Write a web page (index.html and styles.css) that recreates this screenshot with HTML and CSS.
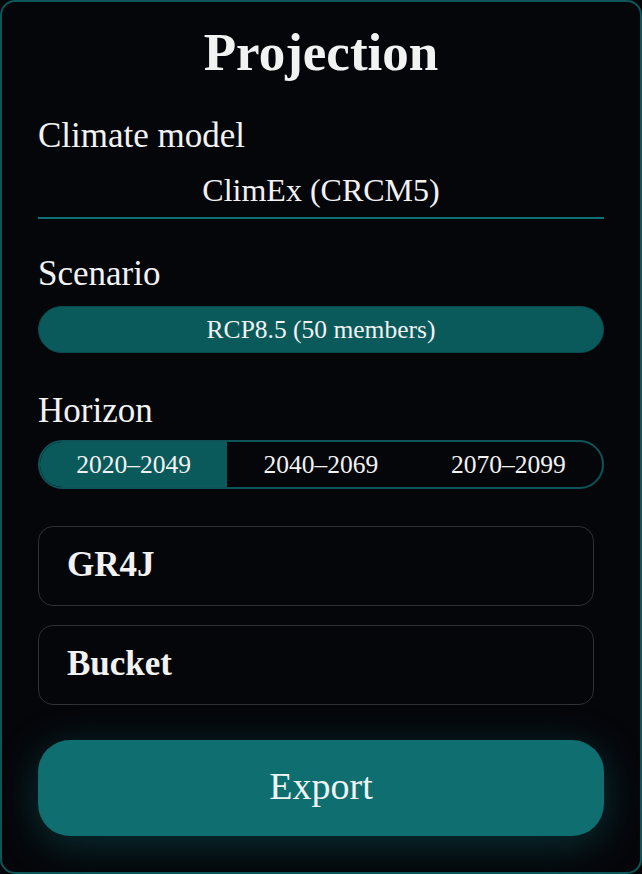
FILE: index.html
```html
<!DOCTYPE html>
<html lang="en">
<head>
<meta charset="utf-8">
<title>Projection</title>
<link rel="stylesheet" href="styles.css">
</head>
<body>
<main class="panel">
  <h1 class="title">Projection</h1>

  <section class="field">
    <div class="label">Climate model</div>
    <div class="select">ClimEx (CRCM5)</div>
  </section>

  <section class="field">
    <div class="label">Scenario</div>
    <div class="pill">RCP8.5 (50 members)</div>
  </section>

  <section class="field field-horizon">
    <div class="label">Horizon</div>
    <div class="segmented">
      <div class="seg seg-active">2020–2049</div>
      <div class="seg">2040–2069</div>
      <div class="seg">2070–2099</div>
    </div>
  </section>

  <div class="cards">
    <div class="card">GR4J</div>
    <div class="card">Bucket</div>
  </div>

  <button class="export" type="button">Export</button>
</main>
</body>
</html>
```

FILE: styles.css
```css
* { box-sizing: border-box; }

html, body {
  margin: 0;
  padding: 0;
  background: #05060a;
}

body {
  font-family: "Liberation Serif", "Times New Roman", serif;
  color: #f2f2f2;
}

.panel {
  width: 642px;
  height: 874px;
  border: 2px solid #0d5759;
  border-radius: 15px;
  background: #05060a;
  padding: 20px 36px 36px 36px;
  display: flex;
  flex-direction: column;
}

.title {
  margin: 0;
  font-size: 53px;
  line-height: 60px;
  font-weight: 700;
  text-align: center;
  color: #f2f2f2;
}

.field {
  display: flex;
  flex-direction: column;
}

.label {
  font-size: 35px;
  line-height: 40px;
  margin: 34px 0 12px 0;
}

.field:first-of-type .label {
  margin-bottom: 0;
}

.select {
  font-size: 32px;
  line-height: 37px;
  text-align: center;
  padding: 16px 0 8px 0;
  border-bottom: 2px solid #0e7272;
}

.field:nth-of-type(2) .label {
  margin-top: 35px;
  margin-bottom: 12px;
}

.pill {
  font-size: 25.5px;
  line-height: 27px;
  padding: 9px 0;
  text-align: center;
  background: #0b5a5b;
  border: 1px solid #0a4b4e;
  border-radius: 24px;
}

.field-horizon .label {
  margin-top: 38px;
  margin-bottom: 9px;
}

.segmented {
  display: grid;
  grid-template-columns: 1fr 1fr 1fr;
  border: 2px solid #0c5457;
  border-radius: 25px;
  overflow: hidden;
}

.seg {
  font-size: 25.5px;
  line-height: 29px;
  padding: 8px 0;
  text-align: center;
}

.seg-active {
  background: #0b5a5b;
}

.cards {
  display: flex;
  flex-direction: column;
  gap: 19px;
  margin: 37px 10px 0 0;
}

.card {
  font-size: 35px;
  line-height: 40px;
  font-weight: 700;
  padding: 18px 28px 20px 28px;
  border: 1.5px solid #303135;
  border-radius: 15px;
}

.export {
  margin-top: 35px;
  height: 96px;
  width: 100%;
  border: none;
  border-radius: 32px;
  background: #0e6e70;
  color: #eef4f4;
  font-family: "Liberation Serif", "Times New Roman", serif;
  font-size: 38px;
  line-height: 44px;
  padding: 0 0 4px 0;
  box-shadow: 0 8px 40px rgba(16, 122, 124, 0.38);
}
```
